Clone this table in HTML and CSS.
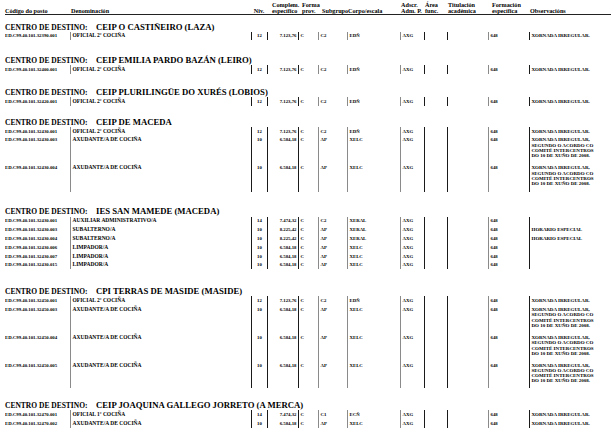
FILE: index.html
```html
<!DOCTYPE html>
<html lang="gl">
<head>
<meta charset="utf-8">
<title>Centros de destino</title>
<link rel="stylesheet" href="styles.css">
</head>
<body>
<div class="page">
  <div class="head">
    <div class="h">Código do posto</div>
    <div class="h">Denominación</div>
    <div class="h h-niv">Niv.</div>
    <div class="h h-comp">Complem.<br>específico</div>
    <div class="h h-pad">Forma<br>prov.</div>
    <div class="h h-pad">Subgrupo</div>
    <div class="h">Corpo/escala</div>
    <div class="h">Adscr.<br>Adm. P.</div>
    <div class="h">Área<br>func.</div>
    <div class="h">Titulación<br>académica</div>
    <div class="h h-pad">Formación<br>específica</div>
    <div class="h">Observacións</div>
  </div>

  <section class="sec s1">
    <h2 class="title"><span class="lbl">CENTRO DE DESTINO:</span>CEIP O CASTIÑEIRO (LAZA)</h2>
    <div class="row"><span>ED.C99.40.101.32390.001</span><span>OFICIAL 2ª COCIÑA</span><span>12</span><span>7.123,76</span><span>C</span><span>C2</span><span>EDÑ</span><span>AXG</span><span></span><span></span><span>648</span><span>XORNADA IRREGULAR.</span></div>
  </section>

  <section class="sec s2">
    <h2 class="title"><span class="lbl">CENTRO DE DESTINO:</span>CEIP EMILIA PARDO BAZÁN (LEIRO)</h2>
    <div class="row"><span>ED.C99.40.101.32400.001</span><span>OFICIAL 2ª COCIÑA</span><span>12</span><span>7.123,76</span><span>C</span><span>C2</span><span>EDÑ</span><span>AXG</span><span></span><span></span><span>648</span><span>XORNADA IRREGULAR.</span></div>
  </section>

  <section class="sec s3">
    <h2 class="title"><span class="lbl">CENTRO DE DESTINO:</span>CEIP PLURILINGÜE DO XURÉS (LOBIOS)</h2>
    <div class="row"><span>ED.C99.40.101.32420.001</span><span>OFICIAL 2ª COCIÑA</span><span>12</span><span>7.123,76</span><span>C</span><span>C2</span><span>EDÑ</span><span>AXG</span><span></span><span></span><span>648</span><span>XORNADA IRREGULAR.</span></div>
  </section>

  <section class="sec s4">
    <h2 class="title"><span class="lbl">CENTRO DE DESTINO:</span>CEIP DE MACEDA</h2>
    <div class="row"><span>ED.C99.40.101.32430.001</span><span>OFICIAL 2ª COCIÑA</span><span>12</span><span>7.123,76</span><span>C</span><span>C2</span><span>EDÑ</span><span>AXG</span><span></span><span></span><span>648</span><span>XORNADA IRREGULAR.</span></div>
    <div class="row tall"><span>ED.C99.40.101.32430.003</span><span>AXUDANTE/A DE COCIÑA</span><span>10</span><span>6.584,18</span><span>C</span><span>AP</span><span>XELC</span><span>AXG</span><span></span><span></span><span>648</span><span>XORNADA IRREGULAR,<br>SEGUNDO O ACORDO CO<br>COMITÉ INTERCENTROS<br>DO 10 DE XUÑO DE 2008.</span></div>
    <div class="row tall"><span>ED.C99.40.101.32430.004</span><span>AXUDANTE/A DE COCIÑA</span><span>10</span><span>6.584,18</span><span>C</span><span>AP</span><span>XELC</span><span>AXG</span><span></span><span></span><span>648</span><span>XORNADA IRREGULAR,<br>SEGUNDO O ACORDO CO<br>COMITÉ INTERCENTROS<br>DO 10 DE XUÑO DE 2008.</span></div>
  </section>

  <section class="sec s5">
    <h2 class="title"><span class="lbl">CENTRO DE DESTINO:</span>IES SAN MAMEDE (MACEDA)</h2>
    <div class="row"><span>ED.C99.40.101.32430.001</span><span>AUXILIAR ADMINISTRATIVO/A</span><span>14</span><span>7.474,32</span><span>C</span><span>C2</span><span>XERAL</span><span>AXG</span><span></span><span></span><span>648</span><span></span></div>
    <div class="row"><span>ED.C99.40.101.32430.003</span><span>SUBALTERNO/A</span><span>10</span><span>8.225,42</span><span>C</span><span>AP</span><span>XERAL</span><span>AXG</span><span></span><span></span><span>648</span><span>HORARIO ESPECIAL</span></div>
    <div class="row"><span>ED.C99.40.101.32430.004</span><span>SUBALTERNO/A</span><span>10</span><span>8.225,42</span><span>C</span><span>AP</span><span>XERAL</span><span>AXG</span><span></span><span></span><span>648</span><span>HORARIO ESPECIAL</span></div>
    <div class="row"><span>ED.C99.40.101.32430.006</span><span>LIMPADOR/A</span><span>10</span><span>6.584,18</span><span>C</span><span>AP</span><span>XELC</span><span>AXG</span><span></span><span></span><span>648</span><span></span></div>
    <div class="row"><span>ED.C99.40.101.32430.007</span><span>LIMPADOR/A</span><span>10</span><span>6.584,18</span><span>C</span><span>AP</span><span>XELC</span><span>AXG</span><span></span><span></span><span>648</span><span></span></div>
    <div class="row"><span>ED.C99.40.101.32430.015</span><span>LIMPADOR/A</span><span>10</span><span>6.584,18</span><span>C</span><span>AP</span><span>XELC</span><span>AXG</span><span></span><span></span><span>648</span><span></span></div>
  </section>

  <section class="sec s6">
    <h2 class="title"><span class="lbl">CENTRO DE DESTINO:</span>CPI TERRAS DE MASIDE (MASIDE)</h2>
    <div class="row"><span>ED.C99.40.101.32450.001</span><span>OFICIAL 2ª COCIÑA</span><span>12</span><span>7.123,76</span><span>C</span><span>C2</span><span>EDÑ</span><span>AXG</span><span></span><span></span><span>648</span><span>XORNADA IRREGULAR.</span></div>
    <div class="row tall"><span>ED.C99.40.101.32450.003</span><span>AXUDANTE/A DE COCIÑA</span><span>10</span><span>6.584,18</span><span>C</span><span>AP</span><span>XELC</span><span>AXG</span><span></span><span></span><span>648</span><span>XORNADA IRREGULAR,<br>SEGUNDO O ACORDO CO<br>COMITÉ INTERCENTROS<br>DO 10 DE XUÑO DE 2008.</span></div>
    <div class="row tall short"><span>ED.C99.40.101.32450.004</span><span>AXUDANTE/A DE COCIÑA</span><span>10</span><span>6.584,18</span><span>C</span><span>AP</span><span>XELC</span><span>AXG</span><span></span><span></span><span>648</span><span>XORNADA IRREGULAR,<br>SEGUNDO O ACORDO CO<br>COMITÉ INTERCENTROS<br>DO 10 DE XUÑO DE 2008.</span></div>
    <div class="row tall short"><span>ED.C99.40.101.32450.005</span><span>AXUDANTE/A DE COCIÑA</span><span>10</span><span>6.584,18</span><span>C</span><span>AP</span><span>XELC</span><span>AXG</span><span></span><span></span><span>648</span><span>XORNADA IRREGULAR,<br>SEGUNDO O ACORDO CO<br>COMITÉ INTERCENTROS<br>DO 10 DE XUÑO DE 2008.</span></div>
  </section>

  <section class="sec s7">
    <h2 class="title"><span class="lbl">CENTRO DE DESTINO:</span>CEIP JOAQUINA GALLEGO JORRETO (A MERCA)</h2>
    <div class="row"><span>ED.C99.40.101.32470.001</span><span>OFICIAL 1ª COCIÑA</span><span>14</span><span>7.474,32</span><span>C</span><span>C1</span><span>ECÑ</span><span>AXG</span><span></span><span></span><span>648</span><span>XORNADA IRREGULAR.</span></div>
    <div class="row"><span>ED.C99.40.101.32470.002</span><span>AXUDANTE/A DE COCIÑA</span><span>10</span><span>6.584,18</span><span>C</span><span>AP</span><span>XELC</span><span>AXG</span><span></span><span></span><span>648</span><span>XORNADA IRREGULAR.</span></div>
  </section>
</div>
</body>
</html>
```
FILE: styles.css
```css
html, body {
  margin: 0;
  padding: 0;
  background: #ffffff;
}

body {
  font-family: "Liberation Serif", "Times New Roman", serif;
  font-weight: bold;
  color: #000;
}

.page {
  width: 615px;
  height: 439px;
  overflow: hidden;
  padding: 2px 4px 0 5px;
  box-sizing: border-box;
}

.head,
.row {
  display: grid;
  grid-template-columns: 65px 181px 16px 31px 20px 29px 53px 24px 23px 41px 41px 1fr;
}

.head {
  height: 13px;
  border-bottom: 1px solid #222;
  box-sizing: border-box;
  font-size: 6.2px;
  line-height: 6.2px;
}

.h {
  display: flex;
  flex-direction: column;
  justify-content: flex-end;
  white-space: nowrap;
  padding-left: 1px;
}

.h:first-child { padding-left: 0; }
.h-niv { align-items: center; padding-left: 0; }
.h-comp { padding-left: 5px; }
.h-pad { padding-left: 4px; }

.s1 { margin-top: 6.5px; }
.s2 { margin-top: 15px; }
.s3 { margin-top: 13px; }
.s4 { margin-top: 11px; }
.s5 { margin-top: 14px; }
.s6 { margin-top: 17px; }
.s7 { margin-top: 12px; }

.title {
  margin: 0;
  font-size: 8.7px;
  line-height: 10px;
  height: 10px;
  font-weight: bold;
  white-space: nowrap;
}

.lbl {
  display: inline-block;
  width: 91px;
  font-size: 7.5px;
}

.row {
  height: 8.8px;
  font-size: 4.8px;
  line-height: 5.3px;
}

.s5 .row:first-of-type { margin-top: 1px; }

.row.tall { height: 28px; }
.row.tall.short { height: 27.5px; }

.row > span {
  display: block;
  padding: 1.75px 0 0 1.5px;
  white-space: nowrap;
  overflow: hidden;
  box-sizing: border-box;
}

.row > span:first-child { padding-left: 0; }

.row > span:nth-child(2) { font-size: 5.5px; }
.row > span:nth-child(12) { font-size: 5px; }

.row > span + span {
  border-left: 1px solid #8a8a8a;
}

.row > span:nth-child(3),
.row > span:nth-child(4),
.row > span:nth-child(5),
.row > span:nth-child(9),
.row > span:nth-child(10),
.row > span:nth-child(12) {
  border-left-color: #1a1a1a;
}

.row > span:nth-child(3) {
  text-align: center;
  padding-left: 0;
}

.row > span:nth-child(4) {
  text-align: right;
  padding-right: 1.5px;
}
```
